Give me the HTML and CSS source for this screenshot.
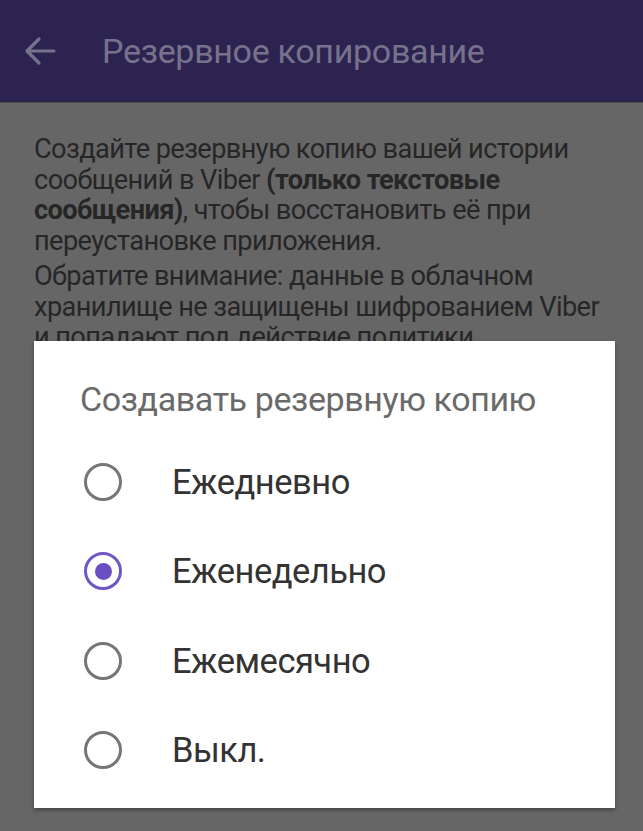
FILE: index.html
```html
<!DOCTYPE html>
<html lang="ru">
<head>
<meta charset="utf-8">
<link rel="stylesheet" href="styles.css">
</head>
<body>
<header class="appbar">
  <svg class="back" width="32" height="30" viewBox="0 0 32 30"><path d="M30 15H4M15 3L3 15l12 12" fill="none" stroke="#77728c" stroke-width="3.2" stroke-linecap="round" stroke-linejoin="round"/></svg>
  <span class="appbar-title">Резервное копирование</span>
</header>
<main class="content">
  <p>Создайте резервную копию вашей истории сообщений в Viber <b>(только текстовые сообщения)</b>, чтобы восстановить её при переустановке приложения.</p>
  <p>Обратите внимание: данные в облачном хранилище не защищены шифрованием Viber и попадают под действие политики</p>
</main>
<div class="scrim">
  <div class="dialog">
    <div class="dialog-title">Создавать резервную копию</div>
    <ul class="options">
      <li class="option"><span class="radio"></span><span class="label">Ежедневно</span></li>
      <li class="option"><span class="radio checked"></span><span class="label">Еженедельно</span></li>
      <li class="option"><span class="radio"></span><span class="label">Ежемесячно</span></li>
      <li class="option"><span class="radio"></span><span class="label">Выкл.</span></li>
    </ul>
  </div>
</div>
</body>
</html>
```
FILE: styles.css
```css
html, body {
  margin: 0;
  padding: 0;
  width: 643px;
  height: 831px;
  overflow: hidden;
  background: #666666;
  font-family: Roboto, "Noto Sans", sans-serif;
}
.appbar {
  height: 103px;
  background: #2c2350;
  display: flex;
  align-items: center;
  padding-left: 24px;
  gap: 46px;
  box-sizing: border-box;
  border-bottom: 1px solid #4a4a4a;
}
.back { display: block; }
.appbar-title {
  color: #77728c;
  font-size: 34px;
  letter-spacing: -0.3px;
}
.content {
  width: 580px;
  padding: 31px 0 0 34px;
  color: #262626;
  font-size: 27.2px;
  line-height: 30.5px;
  letter-spacing: -0.6px;
}
.content p { margin: 0 0 5px 0; }
.content b { font-weight: 700; }
.scrim {
  position: absolute;
  inset: 0;
}
.dialog {
  position: absolute;
  left: 34px;
  top: 341px;
  width: 581px;
  height: 467px;
  background: #ffffff;
  box-shadow: 0 2px 4px rgba(0,0,0,0.35);
  box-sizing: border-box;
  padding: 34px 0 0 46px;
}
.dialog-title {
  color: #6a6a6a;
  font-size: 34px;
  line-height: 48px;
  letter-spacing: -0.4px;
}
.options {
  list-style: none;
  margin: 14px 0 0 0;
  padding: 0;
}
.option {
  display: flex;
  align-items: center;
  height: 89.5px;
  gap: 50px;
}
.radio {
  width: 38px;
  height: 38px;
  box-sizing: border-box;
  border: 3.5px solid #767676;
  border-radius: 50%;
  margin-left: 4px;
  position: relative;
  flex: none;
}
.radio.checked {
  border-color: #7058c4;
}
.radio.checked::after {
  content: "";
  position: absolute;
  left: 50%;
  top: 50%;
  width: 17px;
  height: 17px;
  margin: -8.5px 0 0 -8.5px;
  border-radius: 50%;
  background: #6a4fc2;
}
.label {
  color: #333333;
  font-size: 34.5px;
  letter-spacing: -0.5px;
}
```
